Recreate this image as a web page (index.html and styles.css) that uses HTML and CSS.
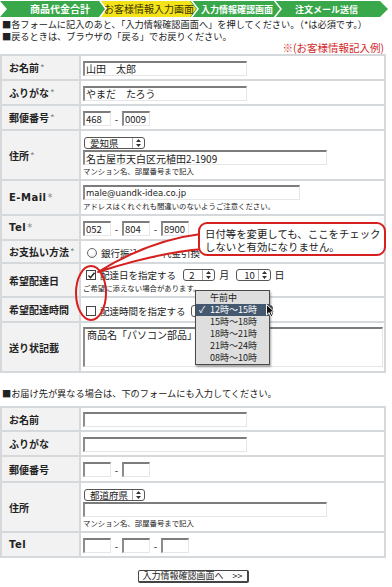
FILE: index.html
```html
<!DOCTYPE html>
<html lang="ja">
<head>
    <meta charset="UTF-8">
    <meta name="viewport" content="width=device-width, initial-scale=1.0">
    <title>お客様情報入力画面</title>
    <link rel="stylesheet" href="styles.css">
</head>
<body>
<div class="page">
    <svg class="steps" width="392" height="18" viewBox="0 0 392 18">
        <polygon class="green" points="0,1 99,1 105,9 99,17 0,17 7,9"/>
        <polygon class="green" points="190,1 380,1 388,9 380,17 190,17"/>
        <polygon class="yellow" points="101,1 190,1 196,9 190,17 101,17 107,9"/>
        <polyline class="sep" points="191,0 198,9 191,18"/>
        <polyline class="sep" points="274,0 281,9 274,18"/>
        <text class="on-green" x="30" y="13">商品代金合計</text>
        <text class="on-yellow" x="104" y="13">お客様情報入力画面</text>
        <text class="on-green small" x="201" y="13">入力情報確認画面</text>
        <text class="on-green small" x="295" y="13">注文メール送信</text>
    </svg>

    <p class="note">■各フォームに記入のあと、「入力情報確認画面へ」を押してください。（*は必須です。）</p>
    <p class="note">■戻るときは、ブラウザの「戻る」でお戻りください。</p>
    <p class="example">※(お客様情報記入例)</p>

    <table class="form">
        <tr class="r25">
            <th>お名前<span class="req">*</span></th>
            <td><input class="txt w-name" type="text" value="山田　太郎"></td>
        </tr>
        <tr class="r25">
            <th>ふりがな<span class="req">*</span></th>
            <td><input class="txt w-name" type="text" value="やまだ　たろう"></td>
        </tr>
        <tr class="r25">
            <th>郵便番号<span class="req">*</span></th>
            <td><input class="txt w-s" type="text" value="468"><span class="dash">-</span><input class="txt w-s" type="text" value="0009"></td>
        </tr>
        <tr class="r50">
            <th>住所<span class="req">*</span></th>
            <td>
                <div class="line"><span class="sel w-pref"><span class="sel-v">愛知県</span><span class="sel-a"><svg width="5" height="8" viewBox="0 0 5 8"><path d="M2.5 0L5 3H0z M2.5 8L0 5h5z"/></svg></span></span></div>
                <div class="line"><input class="txt w-addr" type="text" value="名古屋市天白区元植田2-1909"></div>
                <div class="hint">マンション名、部屋番号まで記入</div>
            </td>
        </tr>
        <tr class="r35">
            <th class="latin">E-Mail<span class="req">*</span></th>
            <td>
                <div class="line"><input class="txt w-mail latin" type="text" value="male@uandk-idea.co.jp"></div>
                <div class="hint">アドレスはくれぐれも間違いのないようご注意ください。</div>
            </td>
        </tr>
        <tr class="r25">
            <th class="latin">Tel<span class="req">*</span></th>
            <td><input class="txt w-s" type="text" value="052"><span class="dash">-</span><input class="txt w-s" type="text" value="804"><span class="dash">-</span><input class="txt w-s" type="text" value="8900"></td>
        </tr>
        <tr class="r23">
            <th>お支払い方法<span class="req">*</span></th>
            <td><span class="radio"></span><span class="opt">銀行振込</span><span class="radio"></span><span class="opt">代金引換</span></td>
        </tr>
        <tr class="r34">
            <th>希望配達日</th>
            <td>
                <div class="line">
                    <span class="chk"><svg width="9" height="9" viewBox="0 0 9 9"><path d="M1.5 4.5l2 2.2 4-5" fill="none" stroke="#222" stroke-width="1.4"/></svg></span><span class="opt">配達日を指定する</span>
                    <span class="sel w-day"><span class="sel-v">2</span><span class="sel-a"><svg width="5" height="8" viewBox="0 0 5 8"><path d="M2.5 0L5 3H0z M2.5 8L0 5h5z"/></svg></span></span><span class="unit">月</span>
                    <span class="sel w-day2"><span class="sel-v c">10</span><span class="sel-a"><svg width="5" height="8" viewBox="0 0 5 8"><path d="M2.5 0L5 3H0z M2.5 8L0 5h5z"/></svg></span></span><span class="unit">日</span>
                </div>
                <div class="hint">ご希望に添えない場合があります。</div>
            </td>
        </tr>
        <tr class="r25">
            <th>希望配達時間</th>
            <td><span class="chk"></span><span class="opt">配達時間を指定する</span><span class="sel w-time"><span class="sel-v"></span><span class="sel-a dark"></span></span></td>
        </tr>
        <tr class="r50">
            <th>送り状記載</th>
            <td><textarea class="area">商品名「パソコン部品」希望</textarea></td>
        </tr>
    </table>

    <p class="note gap">■お届け先が異なる場合は、下のフォームにも入力してください。</p>

    <table class="form">
        <tr class="r24">
            <th>お名前</th>
            <td><input class="txt w-name" type="text"></td>
        </tr>
        <tr class="r25">
            <th>ふりがな</th>
            <td><input class="txt w-name" type="text"></td>
        </tr>
        <tr class="r26">
            <th>郵便番号</th>
            <td><input class="txt w-s" type="text"><span class="dash">-</span><input class="txt w-s" type="text"></td>
        </tr>
        <tr class="r50">
            <th>住所</th>
            <td>
                <div class="line"><span class="sel w-pref"><span class="sel-v">都道府県</span><span class="sel-a"><svg width="5" height="8" viewBox="0 0 5 8"><path d="M2.5 0L5 3H0z M2.5 8L0 5h5z"/></svg></span></span></div>
                <div class="line"><input class="txt w-addr" type="text"></div>
                <div class="hint">マンション名、部屋番号まで記入</div>
            </td>
        </tr>
        <tr class="r25">
            <th class="latin">Tel</th>
            <td><input class="txt w-s" type="text"><span class="dash">-</span><input class="txt w-s" type="text"><span class="dash">-</span><input class="txt w-s" type="text"></td>
        </tr>
    </table>

    <div class="submit"><button type="button">入力情報確認画面へ　&gt;&gt;</button></div>

    <!-- annotation drawn over the form -->
    <svg class="marks" width="392" height="587" viewBox="0 0 392 587">
        <path class="tail" d="M201 234 Q150 240 98 272 Q160 252 204 249 Z"/>
        <ellipse class="ring" cx="91" cy="293" rx="15" ry="27"/>
    </svg>
    <div class="callout">日付等を変更しても、ここをチェック<br>しないと有効になりません。</div>

    <ul class="menu">
        <li>午前中</li>
        <li class="on"><span class="tick">✓</span>12時～15時</li>
        <li>15時～18時</li>
        <li>18時～21時</li>
        <li>21時～24時</li>
        <li>08時～10時</li>
    </ul>
    <svg class="cursor" width="9" height="14" viewBox="0 0 9 14">
        <path d="M0.5 0.5V11l2.6-2.4 1.8 4.3 1.8-.8-1.8-4.2H8.5z" fill="#111" stroke="#fff" stroke-width="1"/>
    </svg>
</div>
</body>
</html>
```

FILE: styles.css
```css
body {
    margin: 0;
    background: #fff;
    font-family: "Noto Sans CJK JP", sans-serif;
    color: #222;
}
.page {
    position: relative;
    width: 392px;
    height: 587px;
    overflow: hidden;
}
.steps {
    display: block;
}
.steps .green {
    fill: #38a84a;
}
.steps .yellow {
    fill: #f4e318;
}
.steps .sep {
    fill: none;
    stroke: #fff;
    stroke-width: 1.5;
}
.steps text {
    font-size: 10px;
    font-weight: bold;
}
.steps .small {
    font-size: 9px;
}
.steps .on-green {
    fill: #fff;
}
.steps .on-yellow {
    fill: #3a3300;
    font-weight: normal;
}
.note {
    margin: 0 0 0 2px;
    font-size: 9.2px;
    line-height: 12px;
    white-space: nowrap;
}
.note.gap {
    margin-top: 14px;
    margin-bottom: 7px;
}
.example {
    margin: 0;
    padding-right: 8px;
    text-align: right;
    color: #d42a2a;
    font-size: 10.5px;
    line-height: 12px;
}
.form {
    width: 386px;
    border-collapse: collapse;
    border: 2px solid #b4b8bc;
}
.form th,
.form td {
    border: 2px solid #d6d9dc;
    padding: 0;
    vertical-align: middle;
}
.form th {
    width: 70px;
    padding-left: 7px;
    background: #f2f2f2;
    text-align: left;
    font-size: 10px;
    font-weight: bold;
    white-space: nowrap;
}
.form td {
    padding-left: 2px;
    font-size: 10px;
    white-space: nowrap;
}
.latin {
    font-family: "DejaVu Sans", sans-serif;
    letter-spacing: 0.5px;
}
.req {
    color: #888;
    font-weight: normal;
    margin-left: 1px;
}
.r23 { height: 23px; }
.r24 { height: 24px; }
.r25 { height: 25px; }
.r26 { height: 26px; }
.r34 { height: 34px; }
.r35 { height: 35px; }
.r50 { height: 50px; }

.txt {
    box-sizing: border-box;
    height: 15px;
    margin: 0;
    padding: 0 1px;
    border-top: 2px solid #7c7c7c;
    border-left: 2px solid #8c8c8c;
    border-right: 1px solid #e6e6e6;
    border-bottom: 1px solid #e6e6e6;
    background: #fff;
    font-family: "Noto Sans CJK JP", sans-serif;
    font-size: 10px;
    color: #222;
    vertical-align: middle;
}
.txt.latin {
    font-family: "DejaVu Sans", sans-serif;
    font-size: 8.5px;
    letter-spacing: 0;
}
.w-name { width: 164px; }
.w-addr { width: 244px; }
.w-mail { width: 217px; }
.w-s {
    width: 28px;
    font-size: 9.5px;
}
.dash {
    display: inline-block;
    width: 11px;
    text-align: center;
    vertical-align: middle;
    font-size: 10px;
}
.line {
    line-height: 14px;
    height: 15px;
}
.hint {
    font-size: 7.4px;
    line-height: 10px;
    margin-top: 1px;
}

.sel {
    display: inline-flex;
    box-sizing: border-box;
    height: 12px;
    border: 1px solid #555;
    border-radius: 3px;
    background: #fff;
    vertical-align: middle;
    font-size: 9.5px;
    line-height: 10px;
}
.sel-v {
    flex: 1;
    padding-left: 5px;
}
.sel-v.c {
    text-align: center;
}
.sel-a {
    width: 11px;
    border-left: 1px solid #aaa;
    display: flex;
    align-items: center;
    justify-content: center;
}
.sel-a svg {
    fill: #333;
}
.sel-a.dark {
    background: #555;
}
.w-pref { width: 61px; margin-left: 1px; }
.w-day { width: 32px; }
.w-day2 { width: 35px; }
.w-time { width: 82px; }
.unit {
    display: inline-block;
    margin: 0 4px;
    vertical-align: middle;
}

.chk {
    display: inline-block;
    box-sizing: border-box;
    width: 10px;
    height: 10px;
    margin-left: 3px;
    border: 1px solid #444;
    background: #fff;
    vertical-align: middle;
}
.chk svg {
    display: block;
    margin: -0.5px 0 0 -0.5px;
}
.radio {
    display: inline-block;
    box-sizing: border-box;
    width: 10px;
    height: 10px;
    margin-left: 4px;
    border: 1px solid #666;
    border-radius: 50%;
    background: radial-gradient(circle at 40% 35%, #fff 30%, #ddd 100%);
    vertical-align: middle;
}
.opt {
    display: inline-block;
    margin: 0 5px 0 4px;
    font-size: 9.5px;
    vertical-align: middle;
}
.area {
    box-sizing: border-box;
    display: block;
    width: 300px;
    height: 40px;
    margin: 0;
    padding: 0 2px;
    border-top: 2px solid #7c7c7c;
    border-left: 2px solid #8c8c8c;
    border-right: 1px solid #e6e6e6;
    border-bottom: 1px solid #e6e6e6;
    resize: none;
    font-family: "Noto Sans CJK JP", sans-serif;
    font-size: 10px;
    line-height: 12px;
    color: #222;
}
.submit {
    display: flex;
    justify-content: center;
    width: 386px;
    margin-top: 12px;
}
.submit button {
    box-sizing: border-box;
    height: 13px;
    padding: 0 4px;
    border: 1px solid #444;
    border-right-width: 2px;
    border-bottom-width: 2px;
    border-radius: 2px;
    background: #fbfbfb;
    font-family: "Noto Sans CJK JP", sans-serif;
    font-size: 9px;
    line-height: 10px;
    white-space: nowrap;
    color: #222;
}

.marks {
    position: absolute;
    left: 0;
    top: 0;
    pointer-events: none;
}
.tail {
    fill: #fff;
    stroke: #d61f1f;
    stroke-width: 2;
    stroke-linejoin: round;
}
.ring {
    fill: none;
    stroke: #d61f1f;
    stroke-width: 2;
}
.callout {
    position: absolute;
    left: 198px;
    top: 222px;
    box-sizing: border-box;
    width: 188px;
    height: 34px;
    padding: 3px 0 0 5px;
    border: 2px solid #d61f1f;
    border-radius: 9px;
    background: #fff;
    font-size: 10.4px;
    line-height: 13px;
    white-space: nowrap;
}
.menu {
    position: absolute;
    left: 195px;
    top: 290px;
    box-sizing: border-box;
    width: 75px;
    height: 75px;
    margin: 0;
    padding: 1px 0;
    list-style: none;
    border: 1px solid #4a4a4a;
    background: #dedede;
    box-shadow: 1px 2px 2px rgba(0, 0, 0, 0.35);
    font-size: 9px;
    line-height: 12px;
}
.menu li {
    position: relative;
    padding-left: 14px;
    color: #222;
}
.menu li.on {
    background: #44586f;
    color: #fff;
}
.tick {
    position: absolute;
    left: 3px;
}
.cursor {
    position: absolute;
    left: 266px;
    top: 304px;
}
```
